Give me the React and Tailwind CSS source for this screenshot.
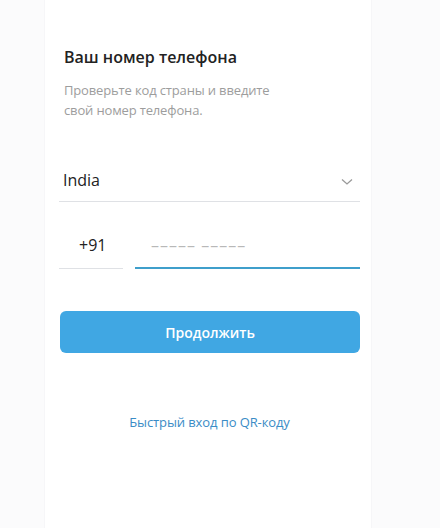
export default function App() {
  return (
    <div className="h-[528px] w-[440px] bg-[#fbfbfc] font-['Open_Sans',sans-serif] overflow-hidden">
      <div className="ml-[44px] w-[328px] h-full bg-white border-x border-[#f6f6f8] flex flex-col pt-[47px]">
        <h1 className="pl-[19px] text-[16px] leading-[20px] font-semibold text-[#222]">
          Ваш номер телефона
        </h1>
        <p className="pl-[19px] mt-[13px] text-[13px] leading-[20px] tracking-[-0.15px] text-[#9d9d9d]">
          Проверьте код страны и введите
          <br />
          свой номер телефона.
        </p>

        <div className="ml-[14px] mr-[11px] mt-[48px] flex items-center justify-between border-b border-[#dfe1e5] pl-[4px] pr-[7px] pb-[9px]">
          <span className="text-[16px] leading-[24px] text-[#222]">India</span>
          <svg width="12" height="8" viewBox="0 0 12 8" className="mt-[4px]">
            <polyline points="1,1.5 6,6 11,1.5" fill="none" stroke="#9a9a9a" strokeWidth="1.3" />
          </svg>
        </div>

        <div className="ml-[14px] mr-[11px] mt-[31px] flex items-end gap-[12px]">
          <div className="w-[64px] border-b border-[#dfe1e5] pl-[20px] pb-[11px]">
            <span className="text-[16px] leading-[24px] text-[#222]">+91</span>
          </div>
          <div className="flex-1 border-b-2 border-[#3f9fcb] pl-[16px] pb-[10px]">
            <span className="text-[16px] leading-[24px] text-[#b8b8b8] tracking-[1px]">––––– –––––</span>
          </div>
        </div>

        <button className="ml-[15px] mr-[11px] mt-[42px] h-[42px] rounded-[6px] bg-[#40a7e3] text-white text-[14px] font-semibold">
          Продолжить
        </button>

        <a className="mt-[59px] text-center text-[13px] leading-[20px] tracking-[-0.1px] text-[#3a8cc6] pl-[3px]">
          Быстрый вход по QR-коду
        </a>
      </div>
    </div>
  );
}
